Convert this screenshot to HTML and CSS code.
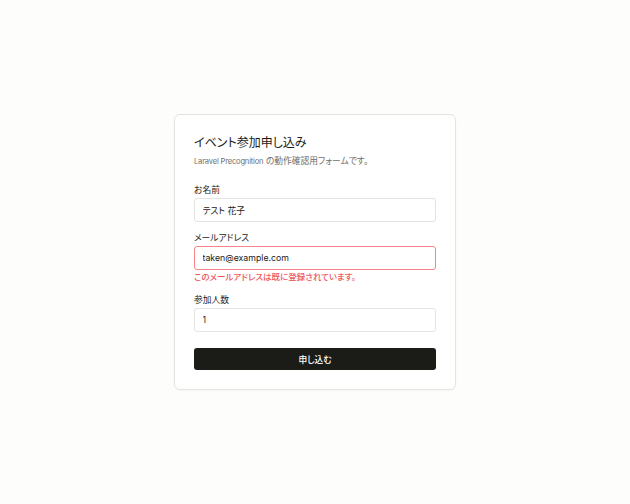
FILE: index.html
```html
<!DOCTYPE html>
<html lang="ja">
<head>
    <meta charset="UTF-8">
    <meta name="viewport" content="width=device-width, initial-scale=1.0">
    <title>イベント参加申し込み</title>
    <link rel="stylesheet" href="styles.css">
</head>
<body>
    <main class="page">
        <section class="card">
            <h1 class="card-title">イベント参加申し込み</h1>
            <p class="card-lead"><span class="lead-en">Laravel Precognition</span> の動作確認用フォームです。</p>

            <form class="entry-form">
                <div class="field">
                    <label for="name" class="field-label">お名前</label>
                    <input type="text" id="name" class="field-input" value="テスト 花子">
                </div>
                <div class="field">
                    <label for="email" class="field-label">メールアドレス</label>
                    <input type="email" id="email" class="field-input is-invalid" value="taken@example.com">
                    <p class="field-error">このメールアドレスは既に登録されています。</p>
                </div>
                <div class="field">
                    <label for="guests" class="field-label">参加人数</label>
                    <input type="number" id="guests" class="field-input" value="1">
                </div>
                <button type="button" class="submit">申し込む</button>
            </form>
        </section>
    </main>
</body>
</html>
```

FILE: styles.css
```css
* {
    box-sizing: border-box;
}

body {
    margin: 0;
    background-color: #fdfdfc;
    color: #1b1b18;
    font-family: "Inter", "Noto Sans CJK JP", sans-serif;
    font-feature-settings: "palt";
}

.page {
    min-height: 100vh;
    display: flex;
    align-items: center;
    justify-content: center;
}

.card {
    width: 282px;
    padding: 19px;
    background-color: #fff;
    border: 1px solid #e3e3e0;
    border-radius: 6px;
    box-shadow: 0 1px 2px rgba(0, 0, 0, 0.03);
}

.card-title {
    margin: 0;
    font-size: 12px;
    line-height: 17.5px;
    font-weight: 400;
}

.card-lead {
    margin: 4px 0 0;
    font-size: 8.75px;
    line-height: 12.5px;
    color: #706f6c;
}

.lead-en {
    font-size: 7.6px;
    letter-spacing: -0.2px;
}

.entry-form {
    margin-top: 15px;
    display: flex;
    flex-direction: column;
    gap: 10px;
}

.field {
    display: flex;
    flex-direction: column;
}

.field-label {
    font-size: 8.75px;
    line-height: 12.5px;
    font-weight: 400;
    margin-bottom: 2px;
}

.field-input {
    width: 100%;
    height: 23.5px;
    padding: 0 7.5px;
    font-family: inherit;
    font-feature-settings: "palt";
    font-size: 8.75px;
    color: #1b1b18;
    background-color: #fff;
    border: 1px solid #e3e3e0;
    border-radius: 3px;
    outline: none;
    -moz-appearance: textfield;
}

.field-input::-webkit-inner-spin-button,
.field-input::-webkit-outer-spin-button {
    -webkit-appearance: none;
    margin: 0;
}

.field-input.is-invalid {
    border-color: #f7868a;
}

.field-error {
    margin: 1.5px 0 0;
    font-size: 8.5px;
    line-height: 12.5px;
    font-weight: 500;
    color: #f0555b;
}

.submit {
    margin-top: 6.5px;
    height: 22px;
    width: 100%;
    font-family: inherit;
    font-feature-settings: "palt";
    font-size: 8.75px;
    font-weight: 500;
    color: #fff;
    background-color: #1b1b18;
    border: none;
    border-radius: 3px;
    cursor: pointer;
}
```
